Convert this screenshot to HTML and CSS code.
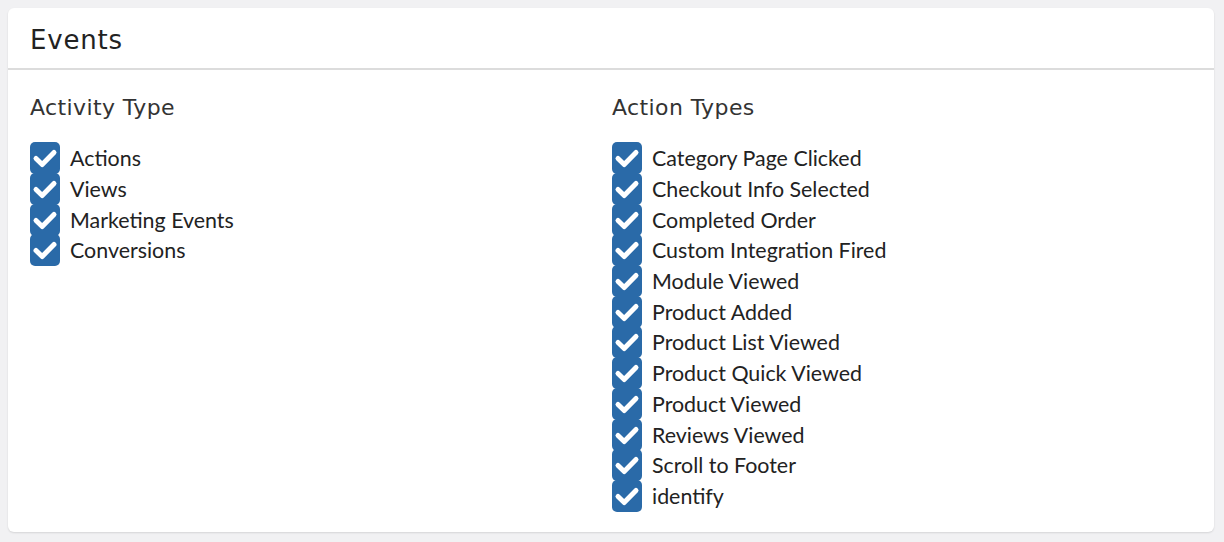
FILE: index.html
```html
<!DOCTYPE html>
<html>
<head>
<meta charset="utf-8">
<link rel="stylesheet" href="styles.css">
</head>
<body>
<div class="card">
  <div class="card-header"><h2 class="title">Events</h2></div>
  <div class="card-body">
    <div class="col">
      <h3 class="subtitle">Activity Type</h3>
      <ul class="checks">
        <li><span class="box"><svg viewBox="0 0 30 32"><path d="M6 16.5 L12.2 22.5 L24 10.5" /></svg></span>Actions</li>
        <li><span class="box"><svg viewBox="0 0 30 32"><path d="M6 16.5 L12.2 22.5 L24 10.5" /></svg></span>Views</li>
        <li><span class="box"><svg viewBox="0 0 30 32"><path d="M6 16.5 L12.2 22.5 L24 10.5" /></svg></span>Marketing Events</li>
        <li><span class="box"><svg viewBox="0 0 30 32"><path d="M6 16.5 L12.2 22.5 L24 10.5" /></svg></span>Conversions</li>
      </ul>
    </div>
    <div class="col">
      <h3 class="subtitle">Action Types</h3>
      <ul class="checks">
        <li><span class="box"><svg viewBox="0 0 30 32"><path d="M6 16.5 L12.2 22.5 L24 10.5" /></svg></span>Category Page Clicked</li>
        <li><span class="box"><svg viewBox="0 0 30 32"><path d="M6 16.5 L12.2 22.5 L24 10.5" /></svg></span>Checkout Info Selected</li>
        <li><span class="box"><svg viewBox="0 0 30 32"><path d="M6 16.5 L12.2 22.5 L24 10.5" /></svg></span>Completed Order</li>
        <li><span class="box"><svg viewBox="0 0 30 32"><path d="M6 16.5 L12.2 22.5 L24 10.5" /></svg></span>Custom Integration Fired</li>
        <li><span class="box"><svg viewBox="0 0 30 32"><path d="M6 16.5 L12.2 22.5 L24 10.5" /></svg></span>Module Viewed</li>
        <li><span class="box"><svg viewBox="0 0 30 32"><path d="M6 16.5 L12.2 22.5 L24 10.5" /></svg></span>Product Added</li>
        <li><span class="box"><svg viewBox="0 0 30 32"><path d="M6 16.5 L12.2 22.5 L24 10.5" /></svg></span>Product List Viewed</li>
        <li><span class="box"><svg viewBox="0 0 30 32"><path d="M6 16.5 L12.2 22.5 L24 10.5" /></svg></span>Product Quick Viewed</li>
        <li><span class="box"><svg viewBox="0 0 30 32"><path d="M6 16.5 L12.2 22.5 L24 10.5" /></svg></span>Product Viewed</li>
        <li><span class="box"><svg viewBox="0 0 30 32"><path d="M6 16.5 L12.2 22.5 L24 10.5" /></svg></span>Reviews Viewed</li>
        <li><span class="box"><svg viewBox="0 0 30 32"><path d="M6 16.5 L12.2 22.5 L24 10.5" /></svg></span>Scroll to Footer</li>
        <li><span class="box"><svg viewBox="0 0 30 32"><path d="M6 16.5 L12.2 22.5 L24 10.5" /></svg></span>identify</li>
      </ul>
    </div>
  </div>
</div>
</body>
</html>
```

FILE: styles.css
```css
html, body {
  margin: 0;
  padding: 0;
  background: #f1f1f3;
}
body {
  padding: 8px 10px 10px 8px;
  height: 542px;
  box-sizing: border-box;
}
.card {
  background: #fff;
  border-radius: 6px;
  box-shadow: 0 1px 2px rgba(0,0,0,0.12);
  height: 524px;
  box-sizing: border-box;
}
.card-header {
  height: 62px;
  border-bottom: 2px solid #dcdcdc;
  box-sizing: border-box;
  padding: 0 22px;
  display: flex;
  align-items: center;
}
.title {
  margin: 0;
  font-family: "DejaVu Sans", sans-serif;
  font-weight: normal;
  font-size: 26px;
  color: #222;
  letter-spacing: 0.8px;
  position: relative;
  top: 2px;
}
.card-body {
  display: grid;
  grid-template-columns: 582px 1fr;
  padding: 24px 22px 0 22px;
}
.subtitle {
  margin: 0 0 21px 0;
  font-family: "DejaVu Sans", sans-serif;
  font-weight: normal;
  font-size: 22px;
  line-height: 28px;
  color: #333;
  letter-spacing: 0.4px;
}
.checks {
  list-style: none;
  margin: 0;
  padding: 0;
}
.checks li {
  display: flex;
  align-items: center;
  height: 30.7px;
  font-family: "Lato", sans-serif;
  font-size: 21.4px;
  color: #222;
}
.box {
  width: 30px;
  height: 32px;
  margin-right: 10px;
  background: #2a6aa8;
  border-radius: 5px;
  display: flex;
  flex: none;
}
.box svg {
  width: 30px;
  height: 32px;
}
.box path {
  fill: none;
  stroke: #fff;
  stroke-width: 5;
  stroke-linecap: round;
  stroke-linejoin: round;
}
```
